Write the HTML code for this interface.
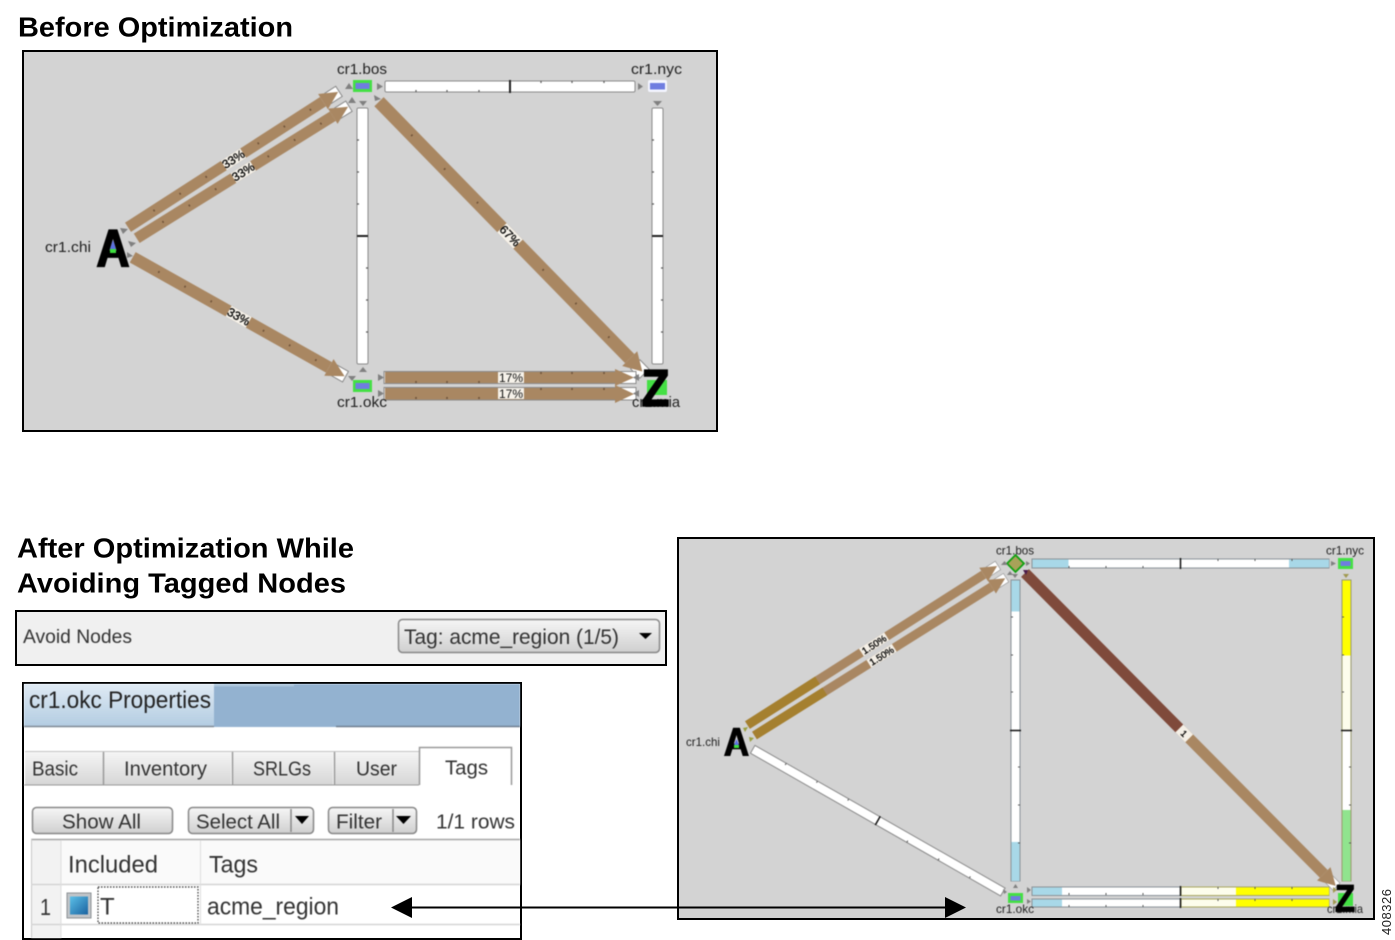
<!DOCTYPE html>
<html>
<head>
<meta charset="utf-8">
<title>Before and After Optimization</title>
<style>
html,body{margin:0;padding:0;background:#fff}
svg{display:block}
text{font-family:"Liberation Sans",sans-serif;fill:#222}
.soft{filter:blur(.45px)}
</style>
</head>
<body>
<svg xmlns="http://www.w3.org/2000/svg" width="1395" height="940" viewBox="0 0 1395 940">
<defs>
<linearGradient id="tg" x1="0" y1="0" x2="0" y2="1"><stop offset="0" stop-color="#dfeaf4"/><stop offset="1" stop-color="#b4cde2"/></linearGradient>
<linearGradient id="btn" x1="0" y1="0" x2="0" y2="1"><stop offset="0" stop-color="#f6f6f6"/><stop offset="1" stop-color="#cfcfcf"/></linearGradient>
<linearGradient id="tab" x1="0" y1="0" x2="0" y2="1"><stop offset="0" stop-color="#f5f5f5"/><stop offset="1" stop-color="#d6d6d6"/></linearGradient>
<linearGradient id="cb" x1="0" y1="0" x2="1" y2="1"><stop offset="0" stop-color="#5cc0e8"/><stop offset="1" stop-color="#1a62a0"/></linearGradient>
</defs>

<!-- Headings -->
<text x="18" y="36.500" font-size="28" font-weight="bold" style="fill:#000" textLength="275" lengthAdjust="spacingAndGlyphs">Before Optimization</text>
<text x="17" y="557.500" font-size="28" font-weight="bold" style="fill:#000" textLength="337" lengthAdjust="spacingAndGlyphs">After Optimization While</text>
<text x="17" y="592.500" font-size="28" font-weight="bold" style="fill:#000" textLength="329" lengthAdjust="spacingAndGlyphs">Avoiding Tagged Nodes</text>

<!-- ============ TOP DIAGRAM ============ -->
<rect x="23" y="51" width="694" height="380" fill="#d3d3d3" stroke="#000" stroke-width="2"/>
<g class="soft">
<!-- bars -->
<rect x="385" y="81" width="250" height="11" rx="1.500" fill="#fff" stroke="#8a8a8a"/>
<path d="M510 80v13" stroke="#222" stroke-width="2"/>
<path d="M416 92v-2M447 92v-2M479 92v-2M541 81v2M572 81v2M604 81v2" stroke="#555" stroke-width="1.200"/>
<rect x="357" y="108" width="11" height="256" rx="1.500" fill="#fff" stroke="#8a8a8a"/>
<path d="M357 236h11" stroke="#222" stroke-width="2"/>
<path d="M357 140h2M357 172h2M357 204h2M366 268h2M366 300h2M366 332h2" stroke="#555" stroke-width="1.200"/>
<rect x="652" y="108" width="11" height="256" rx="1.500" fill="#fff" stroke="#8a8a8a"/>
<path d="M652 236h11" stroke="#222" stroke-width="2"/>
<path d="M652 140h2M652 172h2M652 204h2M661 268h2M661 300h2M661 332h2" stroke="#555" stroke-width="1.200"/>

<!-- A to bos 1 -->
<g transform="translate(128,227.3) rotate(-32.8)">
<rect x="238" y="-6" width="13" height="12" fill="#fff" stroke="#888"/>
<rect x="0" y="-5.500" width="232" height="11" fill="#a98762"/>
<polygon points="232,-9 250,0 232,9" fill="#a98762"/>
<path d="M31 -1v2M62 -1v2M93 -1v2M155 -1v2M186 -1v2M217 -1v2" stroke="#6d5138" stroke-width="1.500"/>
<rect x="114" y="-5.500" width="23" height="11" fill="#f6f2ea"/>
<text x="125.500" y="4" font-size="12" text-anchor="middle" style="fill:#000" stroke="#000" stroke-width=".3">33%</text>
</g>
<!-- A to bos 2 -->
<g transform="translate(136.7,238.3) rotate(-31.9)">
<rect x="237" y="-6" width="13" height="12" fill="#fff" stroke="#888"/>
<rect x="0" y="-5.500" width="231" height="11" fill="#a98762"/>
<polygon points="231,-9 249,0 231,9" fill="#a98762"/>
<path d="M31 -1v2M62 -1v2M93 -1v2M155 -1v2M186 -1v2M217 -1v2" stroke="#6d5138" stroke-width="1.500"/>
<rect x="114" y="-5.500" width="23" height="11" fill="#f6f2ea"/>
<text x="125.500" y="4" font-size="12" text-anchor="middle" style="fill:#000" stroke="#000" stroke-width=".3">33%</text>
</g>
<!-- A to okc -->
<g transform="translate(132.7,257.3) rotate(29.3)">
<rect x="231" y="-6" width="13" height="12" fill="#fff" stroke="#888"/>
<rect x="0" y="-6" width="225" height="12" fill="#a98762"/>
<polygon points="225,-9.500 243,0 225,9.500" fill="#a98762"/>
<path d="M30 -1v2M60 -1v2M90 -1v2M150 -1v2M180 -1v2M210 -1v2" stroke="#6d5138" stroke-width="1.500"/>
<rect x="110" y="-6" width="23" height="12" fill="#f6f2ea"/>
<text x="121.500" y="4" font-size="12" text-anchor="middle" style="fill:#000" stroke="#000" stroke-width=".3">33%</text>
</g>
<!-- bos to Z -->
<g transform="translate(379,101.7) rotate(45.7)">
<rect x="367" y="-6.500" width="13" height="13" fill="#fff" stroke="#888"/>
<rect x="0" y="-6.500" width="359" height="13" fill="#a98762"/>
<polygon points="359,-10.500 377,0 359,10.500" fill="#a98762"/>
<path d="M47 -1v2M94 -1v2M141 -1v2M235 -1v2M282 -1v2M329 -1v2" stroke="#6d5138" stroke-width="1.500"/>
<rect x="176" y="-6.500" width="23" height="13" fill="#f6f2ea"/>
<text x="187.500" y="4" font-size="12" text-anchor="middle" style="fill:#000" stroke="#000" stroke-width=".3">67%</text>
</g>
<!-- okc to Z -->
<rect x="384" y="371.500" width="252" height="12" fill="#fff" stroke="#8a8a8a"/>
<rect x="385" y="372" width="230" height="11" fill="#a98762"/>
<polygon points="615,369 634,377.500 615,386" fill="#a98762"/>
<path d="M416 381v2M447 381v2M479 381v2M541 372v2M572 372v2M604 372v2" stroke="#6d5138" stroke-width="1.500"/>
<rect x="498" y="372" width="26" height="11" fill="#f6f2ea"/>
<text x="511" y="382" font-size="12" text-anchor="middle" style="fill:#111">17%</text>
<rect x="384" y="387.500" width="252" height="12.500" fill="#fff" stroke="#8a8a8a"/>
<rect x="385" y="388" width="230" height="11.500" fill="#a98762"/>
<polygon points="615,385 634,394 615,403" fill="#a98762"/>
<path d="M416 397v2M447 397v2M479 397v2M541 388v2M572 388v2M604 388v2" stroke="#6d5138" stroke-width="1.500"/>
<rect x="498" y="388" width="26" height="11" fill="#f6f2ea"/>
<text x="511" y="398" font-size="12" text-anchor="middle" style="fill:#111">17%</text>

<!-- nodes -->
<rect x="353" y="80" width="19" height="12" fill="#44e044"/><rect x="355.500" y="83" width="14" height="6" fill="#6f7de0"/>
<rect x="648" y="80" width="19" height="12" rx="2" fill="#f4f6ff"/><rect x="650" y="83" width="15" height="6.500" fill="#6f7de0"/>
<rect x="353" y="380" width="19" height="12" fill="#44e044"/><rect x="355.500" y="383" width="14" height="6" fill="#6f7de0"/>
<rect x="647" y="380" width="20" height="15" fill="#44e044"/>

<!-- triangles -->
<g fill="#808080">
<polygon points="349,83 345,89 353,89"/>
<polygon points="352,97 348,103 356,103"/><polygon points="359,101 367,101 363,106"/>
<polygon points="377,83 377,90 383,86.500"/><polygon points="643,86.500 638,83 638,90"/>
<polygon points="653,101 662,101 657.500,106"/><polygon points="374,95 381,99 375,101"/>
<polygon points="359,372 367,372 363,367"/><polygon points="348,376 356,376 352,381"/>
<polygon points="378,374 378,381 384,377.500"/><polygon points="378,390 378,397 384,393.500"/>
<polygon points="639,374 639,381 633,377.500"/><polygon points="639,390 639,397 633,393.500"/>
<polygon points="120,228 128,229 123,234"/><polygon points="128,241 136,243 131,247"/><polygon points="127,252 133,256 127,258"/>
</g>

<!-- labels -->
<text x="337" y="74" font-size="15" textLength="50" lengthAdjust="spacingAndGlyphs">cr1.bos</text>
<text x="631" y="74" font-size="15" textLength="51" lengthAdjust="spacingAndGlyphs">cr1.nyc</text>
<text x="45" y="252" font-size="15" textLength="46" lengthAdjust="spacingAndGlyphs">cr1.chi</text>
<text x="337" y="407" font-size="15" textLength="50" lengthAdjust="spacingAndGlyphs">cr1.okc</text>
<text x="632" y="407" font-size="15" textLength="48" lengthAdjust="spacingAndGlyphs">cr1.mia</text>

<!-- big letters -->
<text x="96.500" y="266" font-size="52" font-weight="bold" style="fill:#000" stroke="#000" stroke-width="1.800" textLength="33" lengthAdjust="spacingAndGlyphs">A</text>
<polygon points="113,240 110,249 116,249" fill="#5a6fe0"/><rect x="110" y="249" width="6" height="4" fill="#3fe03f"/>
<text x="641.500" y="406" font-size="52" font-weight="bold" style="fill:#000" stroke="#000" stroke-width="1.500" textLength="28" lengthAdjust="spacingAndGlyphs">Z</text>
</g>

<!-- ============ AVOID NODES ============ -->
<rect x="16" y="611" width="650" height="54" fill="#f0f0f0" stroke="#000" stroke-width="2"/>
<g class="soft">
<text x="23" y="643" font-size="19.500" style="fill:#333" textLength="109" lengthAdjust="spacingAndGlyphs">Avoid Nodes</text>
<rect x="398.500" y="619.500" width="261" height="33" rx="4" fill="url(#btn)" stroke="#888" stroke-width="1.500"/>
<text x="404" y="644" font-size="21" style="fill:#333" textLength="215" lengthAdjust="spacingAndGlyphs">Tag: acme_region (1/5)</text>
<polygon points="639,633 652,633 645.500,639" fill="#000"/>
</g>

<!-- ============ PROPERTIES ============ -->
<rect x="23" y="683" width="498" height="256" fill="#fff" stroke="#000" stroke-width="2"/>
<g class="soft">
<rect x="24" y="684" width="496" height="43" fill="#93b2d0"/>
<rect x="24" y="684" width="190" height="42" fill="url(#tg)"/>
<path d="M24 726.500h190" stroke="#7f8a95" stroke-width="1.500"/>
<path d="M336 726.500h184" stroke="#6e7f90" stroke-width="1.500"/>
<path d="M214 685.500h80" stroke="#b6cde0" stroke-width="1.500"/>
<text x="29" y="708" font-size="24" style="fill:#222" textLength="182" lengthAdjust="spacingAndGlyphs">cr1.okc Properties</text>

<!-- tabs -->
<rect x="25" y="752" width="78" height="33" fill="url(#tab)"/>
<rect x="104" y="752" width="127" height="33" fill="url(#tab)"/>
<rect x="233" y="752" width="100" height="33" fill="url(#tab)"/>
<rect x="335" y="752" width="84" height="33" fill="url(#tab)"/>
<path d="M103.500 752v33M232.500 752v33M334.500 752v33" stroke="#9a9a9a" stroke-width="1.500" fill="none"/>
<path d="M25 751.500h394" stroke="#c4c4c4"/>
<path d="M419.500 785V747.500H511.500V785" stroke="#999" stroke-width="1.500" fill="#fff"/>
<path d="M24 785h395" stroke="#999" stroke-width="1"/>
<text x="32" y="775.500" font-size="20" style="fill:#333" textLength="46" lengthAdjust="spacingAndGlyphs">Basic</text>
<text x="124" y="775.500" font-size="20" style="fill:#333" textLength="83" lengthAdjust="spacingAndGlyphs">Inventory</text>
<text x="253" y="775.500" font-size="20" style="fill:#333" textLength="58" lengthAdjust="spacingAndGlyphs">SRLGs</text>
<text x="356" y="775.500" font-size="20" style="fill:#333" textLength="41" lengthAdjust="spacingAndGlyphs">User</text>
<text x="445" y="774.500" font-size="20" style="fill:#333" textLength="43" lengthAdjust="spacingAndGlyphs">Tags</text>

<!-- toolbar -->
<rect x="32.500" y="807.500" width="140" height="26" rx="4" fill="url(#btn)" stroke="#888" stroke-width="1.500"/>
<text x="62" y="828.500" font-size="20" style="fill:#333" textLength="79" lengthAdjust="spacingAndGlyphs">Show All</text>
<rect x="188.500" y="807.500" width="125" height="26" rx="4" fill="url(#btn)" stroke="#888" stroke-width="1.500"/>
<path d="M291 809v23" stroke="#888" stroke-width="1.500"/>
<text x="196" y="828.500" font-size="20" style="fill:#333" textLength="84" lengthAdjust="spacingAndGlyphs">Select All</text>
<polygon points="295,816 309,816 302,824" fill="#000"/>
<rect x="328.500" y="807.500" width="88" height="26" rx="4" fill="url(#btn)" stroke="#888" stroke-width="1.500"/>
<path d="M393 809v23" stroke="#888" stroke-width="1.500"/>
<text x="336" y="828.500" font-size="20" style="fill:#333" textLength="46" lengthAdjust="spacingAndGlyphs">Filter</text>
<polygon points="396,816 411,816 403.500,824" fill="#000"/>
<text x="436" y="828.500" font-size="20" style="fill:#333" textLength="79" lengthAdjust="spacingAndGlyphs">1/1 rows</text>

<!-- table -->
<rect x="31" y="839" width="489" height="46" fill="#fafafa"/>
<rect x="31" y="839" width="30" height="99" fill="#f2f2f2"/>
<path d="M31 839.500h489" stroke="#a5a5a5" stroke-width="1.500"/>
<path d="M31.500 839v99" stroke="#c8c8c8"/>
<path d="M31 884.500h489" stroke="#d4d4d4" stroke-width="1.500"/>
<path d="M31 924.500h489" stroke="#d4d4d4" stroke-width="1.500"/>
<path d="M61 840v98M200.500 840v85" stroke="#dedede"/>
<text x="68" y="872.500" font-size="24" style="fill:#333" textLength="90" lengthAdjust="spacingAndGlyphs">Included</text>
<text x="209" y="872.500" font-size="24" style="fill:#333" textLength="49" lengthAdjust="spacingAndGlyphs">Tags</text>
<text x="40" y="915" font-size="23" style="fill:#333" textLength="11" lengthAdjust="spacingAndGlyphs">1</text>
<rect x="67" y="893" width="24" height="25" fill="#c0c4c8" stroke="#8d9194"/>
<rect x="70" y="896.500" width="18" height="18" fill="url(#cb)"/>
<rect x="98" y="887" width="100" height="36" fill="#fff" stroke="#333" stroke-width="1.200" stroke-dasharray="1.500 1.500"/>
<text x="100" y="914.500" font-size="24" style="fill:#333">T</text>
<text x="207" y="914.500" font-size="24" style="fill:#333" textLength="132" lengthAdjust="spacingAndGlyphs">acme_region</text>
</g>

<!-- ============ RIGHT DIAGRAM ============ -->
<rect x="678" y="538" width="696" height="381" fill="#d3d3d3" stroke="#000" stroke-width="2"/>
<g class="soft">
<!-- top bar -->
<rect x="1032" y="559" width="297" height="9" fill="#fff" stroke="#8a9298"/>
<rect x="1032.500" y="559.500" width="36" height="8" fill="#a8d8e8"/><rect x="1289" y="559.500" width="40" height="8" fill="#a8d8e8"/>
<path d="M1180.500 558v11" stroke="#111" stroke-width="1.500"/>
<path d="M1069 566v2M1106 566v2M1143 566v2M1218 559v2M1255 559v2M1292 559v2" stroke="#555"/>
<!-- left vertical -->
<rect x="1011" y="580" width="9" height="301" fill="#fff" stroke="#8a9298"/>
<rect x="1011.500" y="580.500" width="8" height="31" fill="#a8d8e8"/><rect x="1011.500" y="842" width="8" height="39" fill="#a8d8e8"/>
<path d="M1010 730.500h11" stroke="#111" stroke-width="1.500"/>
<path d="M1011 617h2M1011 655h2M1011 692h2M1018 767h2M1018 805h2M1018 843h2" stroke="#555"/>
<!-- right vertical -->
<rect x="1342" y="580" width="9" height="301" fill="#fff" stroke="#9a9a70"/>
<rect x="1342.500" y="580.500" width="8" height="75" fill="#ffff00"/><rect x="1342.500" y="655.500" width="8" height="75" fill="#fdfdec"/><rect x="1342.500" y="810" width="8" height="71" fill="#90e48e"/>
<path d="M1341 730.500h11" stroke="#111" stroke-width="1.500"/>
<path d="M1342 617h2M1342 655h2M1342 692h2M1349 767h2M1349 805h2M1349 843h2" stroke="#555"/>
<!-- bottom bars -->
<rect x="1032" y="887" width="297" height="8.500" fill="#fff" stroke="#8a9298"/>
<rect x="1032.500" y="887.500" width="29.500" height="7.500" fill="#a8d8e8"/>
<rect x="1181" y="887" width="148" height="8.500" fill="#fdfdec" stroke="#a9a860"/><rect x="1236" y="887.500" width="93" height="7.500" fill="#ffff00"/>
<path d="M1180.500 886v10" stroke="#111" stroke-width="1.500"/>
<path d="M1069 893v2M1106 893v2M1143 893v2M1218 887v2M1255 887v2M1292 887v2" stroke="#555"/>
<rect x="1032" y="899" width="297" height="8" fill="#fff" stroke="#8a9298"/>
<rect x="1032.500" y="899.500" width="29.500" height="7" fill="#a8d8e8"/>
<rect x="1181" y="899" width="148" height="8" fill="#fdfdec" stroke="#a9a860"/><rect x="1236" y="899.500" width="93" height="7" fill="#ffff00"/>
<path d="M1180.500 898v10" stroke="#111" stroke-width="1.500"/>
<path d="M1069 905v2M1106 905v2M1143 905v2M1218 899v2M1255 899v2M1292 899v2" stroke="#555"/>

<!-- links -->
<g transform="translate(747.5,725) rotate(-32.500)">
<rect x="286" y="-5" width="11" height="10" fill="#fff" stroke="#999" stroke-width=".7"/>
<rect x="0" y="-4.500" width="280" height="9" fill="#a98762"/>
<rect x="0" y="-4.500" width="83" height="9" fill="#a5802f"/>
<polygon points="280,-8 296,0 280,8" fill="#a98762"/>
<rect x="135" y="-4.500" width="30" height="9" fill="#f4efe6"/>
<text x="150" y="3.500" font-size="9.500" text-anchor="middle" style="fill:#000" stroke="#000" stroke-width=".3">1.50%</text>
</g>
<g transform="translate(754.5,735.5) rotate(-32.100)">
<rect x="286" y="-5" width="11" height="10" fill="#fff" stroke="#999" stroke-width=".7"/>
<rect x="0" y="-4.500" width="280" height="9" fill="#a98762"/>
<rect x="0" y="-4.500" width="83" height="9" fill="#a5802f"/>
<polygon points="280,-8 296,0 280,8" fill="#a98762"/>
<rect x="135" y="-4.500" width="30" height="9" fill="#f4efe6"/>
<text x="150" y="3.500" font-size="9.500" text-anchor="middle" style="fill:#000" stroke="#000" stroke-width=".3">1.50%</text>
</g>
<g transform="translate(752.7,749.300) rotate(29.700)">
<rect x="0" y="-4.500" width="288" height="9" fill="#fff" stroke="#8a8a8a"/>
<path d="M144 -5v10" stroke="#111" stroke-width="1.500"/>
<path d="M36 -4.500v2M72 -4.500v2M108 -4.500v2M180 2.500v2M216 2.500v2M252 2.500v2" stroke="#555"/>
</g>
<g transform="translate(1025,573) rotate(45.200)">
<rect x="431" y="-5" width="11" height="10" fill="#fff" stroke="#999" stroke-width=".7"/>
<rect x="0" y="-5.500" width="222" height="11" fill="#7f4a3b"/>
<rect x="222" y="-5.500" width="202" height="11" fill="#a98762"/>
<polygon points="424,-9.500 441,0 424,9.500" fill="#a98762"/>
<rect x="219" y="-5.500" width="14" height="11" fill="#f4efe6"/>
<text x="226" y="3.500" font-size="9" text-anchor="middle" style="fill:#000" stroke="#000" stroke-width=".3">1</text>
</g>

<!-- right nodes -->
<polygon points="1015.500,555 1024,563.500 1015.500,572 1007,563.500" fill="#a9a259" stroke="#10a010" stroke-width="1.800"/>
<rect x="1338" y="558" width="15" height="11" fill="#44e044"/><rect x="1340.500" y="561" width="10" height="5" fill="#6f7de0"/>
<rect x="1008" y="893" width="15" height="10" fill="#44e044"/><rect x="1010.500" y="896" width="10" height="4.500" fill="#6f7de0"/>
<rect x="1338" y="893" width="15" height="13" fill="#44e044"/>

<!-- right triangles -->
<g fill="#808080">
<polygon points="1001,565 1008,565 1004.500,561"/><polygon points="1007,575 1013,575 1010,571"/><polygon points="1012,574 1018,574 1015,578"/>
<polygon points="1026,561 1026,566 1030,563.500"/><polygon points="1336,563.500 1331,561 1331,566"/>
<polygon points="1013,888 1018,888 1015.500,884"/><polygon points="1003,889 1007,892 1004,894"/>
<polygon points="1027,887 1027,893 1031,890"/><polygon points="1027,899 1027,904 1031,901.500"/>
</g>
<polygon points="1023,570 1028,570 1026,575" fill="#4a1a4a"/>
<polygon points="1343,574 1349,574 1346,578" fill="#a09a50"/>
<polygon points="1333,887 1333,893 1337,890" fill="#a09a50"/><polygon points="1333,899 1333,905 1337,902" fill="#a09a50"/>
<polygon points="743,728 748,727 745,732" fill="#9aa040"/><polygon points="749,737 754,738 750,742" fill="#9aa040"/>

<!-- right labels -->
<text x="996" y="554.500" font-size="12" textLength="38" lengthAdjust="spacingAndGlyphs">cr1.bos</text>
<text x="1326" y="554.500" font-size="12" textLength="38" lengthAdjust="spacingAndGlyphs">cr1.nyc</text>
<text x="686" y="746" font-size="12" textLength="34" lengthAdjust="spacingAndGlyphs">cr1.chi</text>
<text x="996" y="913" font-size="12" textLength="38" lengthAdjust="spacingAndGlyphs">cr1.okc</text>
<text x="1327" y="913" font-size="12" textLength="36" lengthAdjust="spacingAndGlyphs">cr1.mia</text>
<text x="724" y="755.500" font-size="39" font-weight="bold" style="fill:#000" stroke="#000" stroke-width="1.400" textLength="25" lengthAdjust="spacingAndGlyphs">A</text>
<polygon points="736.500,739 734,745 739,745" fill="#5a6fe0"/><rect x="734" y="745" width="5" height="3" fill="#3fe03f"/>
<text x="1335" y="911.500" font-size="38" font-weight="bold" style="fill:#000" stroke="#000" stroke-width="1.200" textLength="20" lengthAdjust="spacingAndGlyphs">Z</text>
</g>

<!-- connector arrow -->
<path d="M410 907.500H947" stroke="#000" stroke-width="2"/>
<polygon points="391,907.500 412,897 412,918" fill="#000"/>
<polygon points="966,907.500 945,897 945,918" fill="#000"/>

<!-- figure id -->
<text transform="translate(1391,935) rotate(-90)" font-size="13" style="fill:#222" textLength="46" lengthAdjust="spacing">408326</text>
</svg>
</body>
</html>
